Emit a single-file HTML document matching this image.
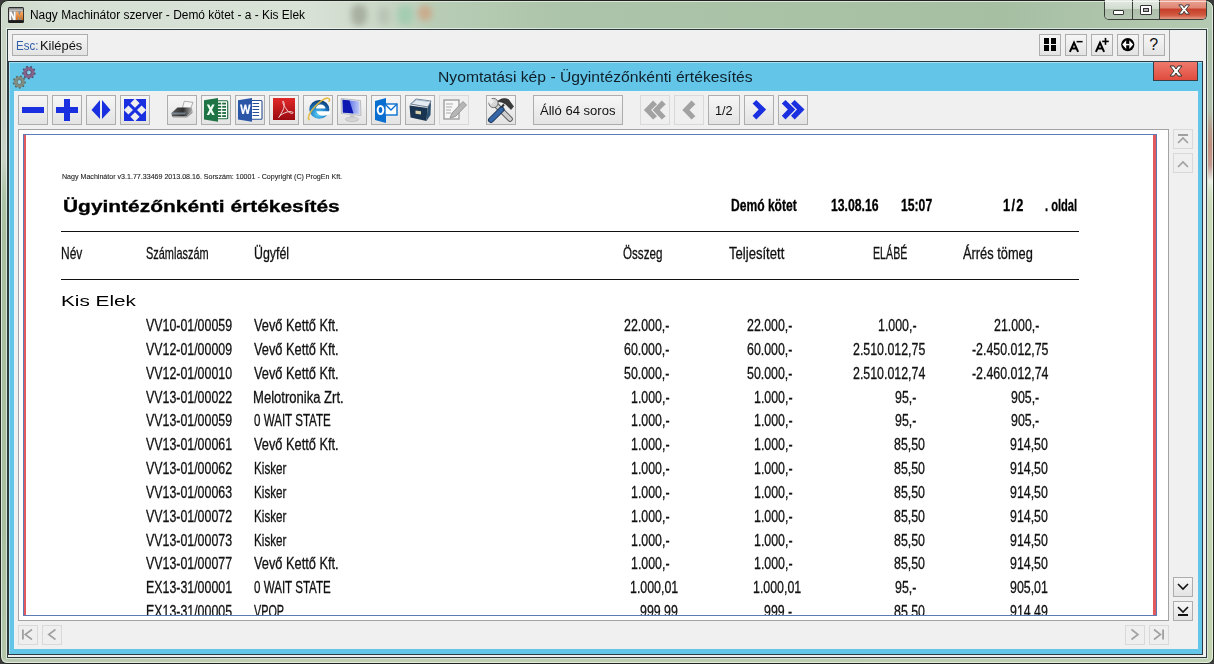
<!DOCTYPE html>
<html><head><meta charset="utf-8"><style>
html,body{margin:0;padding:0;}
body{width:1214px;height:664px;overflow:hidden;position:relative;background:#3a3a3a;font-family:'Liberation Sans',sans-serif;}
.a{position:absolute;box-sizing:border-box;}
.t{position:absolute;white-space:pre;line-height:1;transform-origin:0 0;font-family:'Liberation Sans',sans-serif;}
#frame{left:0;top:0;width:1214px;height:664px;border:1px solid #1f241f;border-radius:8px 8px 7px 7px;background:#a9c1a5;overflow:hidden;}
#tstrip{left:1px;top:1px;width:1212px;height:28px;border-radius:7px 7px 0 0;
  background:linear-gradient(90deg,#cdd9cb 0px,#d7e0d5 60px,#d9e2d7 300px,#cfdbcd 360px,#b9cdb6 430px,#acc4a9 560px,#a9c2a6 800px,#a6bfa3 1000px,#adc4aa 1100px,#b4c9b1 1213px);}
#rstrip{left:1207px;top:29px;width:6px;height:630px;background:linear-gradient(#aec3ab 0px,#b0c2ac 80px,#b89c8c 100px,#c0907e 115px,#c49a90 135px,#d0bcb4 142px,#e8eee4 151px,#d4e2c8 160px,#c8dab8 175px,#c4d8b2 400px,#c0d2b0 630px);}
#bstrip{left:1px;top:658px;width:1212px;height:5px;background:linear-gradient(90deg,#b9c8b0,#c2d0b2 300px,#bccdb0 700px,#c0d2b4 1212px);}
#lstrip{left:1px;top:29px;width:6px;height:630px;background:linear-gradient(#c6d2c4 0px,#c8d2c6 130px,#aec4a8 165px,#a8c0a0 200px,#a8c0a0 500px,#b4c6aa 630px);}
#frame:before{content:'';position:absolute;left:0;top:0;right:0;bottom:0;border:1px solid rgba(255,255,255,.6);border-radius:7px;z-index:2;}
#glow{display:none;}
#cap{left:1104px;top:0;width:103px;height:20px;border:1px solid #3a3f3a;border-top:none;border-radius:0 0 5px 5px;overflow:hidden;}
#cmin{left:0;top:0;width:28px;height:19px;background:linear-gradient(#e4ebe3 0,#d2ddd0 45%,#aebfac 50%,#b5c6b3 100%);border-right:1px solid #3a3f3a;}
#cmax{left:28px;top:0;width:27px;height:19px;background:linear-gradient(#e4ebe3 0,#d2ddd0 45%,#aebfac 50%,#b5c6b3 100%);border-right:1px solid #3a3f3a;}
#cclose{left:55px;top:0;width:47px;height:19px;background:linear-gradient(#eaa597 0,#e08876 40%,#c6402a 50%,#d25a40 80%,#e49a88 100%);}
#inner{left:7px;top:29px;width:1200px;height:629px;border:1px solid #2c3c3e;background:#f0f0f0;box-shadow:0 0 0 1px rgba(255,255,255,.55);}

.btn{position:absolute;box-sizing:border-box;border:1px solid #adadad;background:linear-gradient(#f6f6f6,#e3e3e3);}
.btnd{position:absolute;box-sizing:border-box;border:1px solid #d9d9d9;background:#efefef;}
#sep{left:1169px;top:30px;width:1px;height:31px;background:#a0a0a0;}
#blue{left:8px;top:61px;width:1195px;height:594px;border:1px solid #2d3b44;background:#63c5e8;box-shadow:inset 1px 1px 0 #a6def2;}
#content{left:14px;top:91px;width:1184px;height:558px;background:#f0f0f0;box-shadow:inset 1px 1px 0 #e8f4f8;}
#bclose{left:1153px;top:61px;width:45px;height:20px;border:1px solid #36414a;background:linear-gradient(#ee7a6c,#e04c3e);}
#rframe{left:18px;top:129px;width:1151px;height:492px;border:1px solid #a3a3a3;background:#fff;}
#page{left:23px;top:134px;width:1134px;height:482px;border:1px solid #5c7bb4;background:#fff;}
#redl{left:24px;top:135px;width:2px;height:480px;background:#e35a5e;}
#redr{left:1153px;top:135px;width:3px;height:480px;background:#e35a5e;}
.hl{position:absolute;left:61px;width:1018px;height:1px;background:#111;}
#pageclip{position:absolute;left:0;top:0;width:1214px;height:615px;overflow:hidden;}
#pageclip .t{-webkit-text-stroke:0.3px currentColor;}

</style></head><body>
<div id="frame" class="a"><div id="tstrip" class="a"></div><div id="lstrip" class="a"></div><div id="rstrip" class="a"></div><div id="bstrip" class="a"></div>
<div class="a" style="left:350px;top:3px;width:16px;height:22px;border-radius:8px;background:#8e9484;filter:blur(3px);opacity:.6"></div>
<div class="a" style="left:377px;top:6px;width:12px;height:18px;border-radius:6px;background:#b0b8ac;filter:blur(3px);opacity:.6"></div>
<div class="a" style="left:396px;top:4px;width:16px;height:20px;border-radius:8px;background:#8cc8a6;filter:blur(3px);opacity:.55"></div>
<div class="a" style="left:417px;top:4px;width:14px;height:16px;border-radius:7px;background:#d49470;filter:blur(3px);opacity:.6"></div>
</div>
<div id="glow" class="a"></div>
<!-- app icon -->
<svg class="a" style="left:8px;top:7px" width="16" height="16" viewBox="0 0 16 16">
 <defs><linearGradient id="icg" x1="0" y1="0" x2="0" y2="1"><stop offset="0" stop-color="#7a7a7a"/><stop offset="1" stop-color="#e0e0e0"/></linearGradient>
 <linearGradient id="icm" x1="0" y1="0" x2="0" y2="1"><stop offset="0" stop-color="#f8b070"/><stop offset="1" stop-color="#d86a10"/></linearGradient></defs>
 <rect x="0" y="0" width="16" height="16" rx="1.5" fill="#2c2c2c"/>
 <rect x="1" y="1" width="14" height="3.6" fill="url(#icg)"/>
 <rect x="1" y="4.6" width="14" height="8.6" fill="#8c8c8c"/>
 <path d="M1.3 13.2V4.6h2.3l2.2 5V4.6h1.8v8.6H5.4L3.1 8.1v5.1z" fill="#fafafa"/>
 <path d="M7.9 13.2V4.6h2.2l1.4 4.2 1.4-4.2h2.2v8.6h-1.7V8.6l-1.3 3.6h-1.1L9.7 8.6v4.6z" fill="url(#icm)"/>
 <rect x="0.6" y="13.2" width="14.8" height="2.8" rx="1" fill="#1c1c1c"/>
</svg>
<div id="cap" class="a">
 <div id="cmin" class="a"></div><div id="cmax" class="a"></div><div id="cclose" class="a"></div>
</div>
<div class="a" style="left:1113px;top:10px;width:11px;height:5px;border:1px solid #333;background:#fff;border-radius:1px"></div>
<div class="a" style="left:1140px;top:5px;width:12px;height:10px;border:1px solid #333;background:#fff;border-radius:1px"></div>
<div class="a" style="left:1143px;top:8px;width:6px;height:4px;border:1px solid #333;background:#b0b0b0"></div>
<svg class="a" style="left:1176.5px;top:4.3px" width="14.3" height="11" viewBox="0 0 16 12" preserveAspectRatio="none">
 <path d="M2 1h4l2 3 2-3h4l-4 5 4 5h-4l-2-3-2 3H2l4-5z" fill="#fff" stroke="#333" stroke-width="1"/>
</svg>

<div id="inner" class="a"></div>
<!-- Esc button -->
<div class="btn" style="left:12px;top:34px;width:76px;height:22px"></div>
<!-- right toolbar buttons -->
<div class="btn" style="left:1039px;top:34px;width:22px;height:22px"></div>
<div class="btn" style="left:1065px;top:34px;width:22px;height:22px"></div>
<div class="btn" style="left:1091px;top:34px;width:22px;height:22px"></div>
<div class="btn" style="left:1117px;top:34px;width:22px;height:22px"></div>
<div class="btn" style="left:1143px;top:34px;width:22px;height:22px"></div>
<div id="sep" class="a"></div>
<svg class="a" style="left:1039px;top:34px" width="130" height="22">
 <rect x="5" y="4" width="5" height="6" fill="#000"/><rect x="12" y="4" width="5" height="6" fill="#000"/>
 <rect x="5" y="11" width="5" height="6" fill="#000"/><rect x="12" y="11" width="5" height="6" fill="#000"/>
 <path d="M30.9 17.8L35 8.6 39.1 17.8M32.3 14.6h5.4" fill="none" stroke="#000" stroke-width="2"/>
 <rect x="37.6" y="6.9" width="6" height="1.5" fill="#000"/>
 <path d="M56.9 17.8L61 8.6 65.1 17.8M58.3 14.6h5.4" fill="none" stroke="#000" stroke-width="2"/>
 <rect x="63.2" y="6.6" width="6.6" height="1.6" fill="#000"/><rect x="65.7" y="3.9" width="1.6" height="6.9" fill="#000"/>
 <circle cx="88.75" cy="10.6" r="6.6" fill="#000"/>
 <path d="M83.3 10.6L87.2 6.3V14.9zM94.2 10.6L90.3 6.3V14.9z" fill="#fff"/>
 <rect x="87" y="9.9" width="3.5" height="1.4" fill="#fff"/>
</svg>
<div class="t" style="left:1149.3px;top:37px;font-size:16px;color:#111">?</div>

<!-- blue panel -->
<div id="blue" class="a"></div>
<svg class="a" style="left:10px;top:63px" width="30" height="28" viewBox="0 0 30 28">
 <path d="M23.49 9.22 L25.69 9.91 L25.31 11.77 L23.02 11.54 L22.59 12.24 L23.84 14.18 L22.35 15.36 L20.74 13.71 L19.97 13.97 L19.68 16.26 L17.78 16.21 L17.60 13.91 L16.84 13.61 L15.15 15.17 L13.73 13.92 L15.07 12.05 L14.68 11.33 L12.38 11.44 L12.10 9.56 L14.33 8.99 L14.49 8.19 L12.66 6.80 L13.65 5.18 L15.73 6.17 L16.37 5.66 L15.86 3.42 L17.66 2.81 L18.61 4.91 L19.43 4.93 L20.48 2.89 L22.25 3.58 L21.63 5.80 L22.24 6.34 L24.36 5.45 L25.27 7.12 L23.37 8.41Z" fill="#46506a"/>
 <circle cx="18.9" cy="9.5" r="4.1" fill="none" stroke="#84628a" stroke-width="3"/>
 <circle cx="18.9" cy="9.5" r="1.9" fill="#8fd0ea"/>
 <path d="M13.64 18.30 L15.89 18.74 L15.71 20.57 L13.42 20.55 L13.08 21.26 L14.52 23.04 L13.20 24.32 L11.46 22.83 L10.74 23.16 L10.71 25.45 L8.87 25.59 L8.49 23.32 L7.74 23.11 L6.23 24.84 L4.74 23.77 L5.90 21.79 L5.46 21.14 L3.19 21.50 L2.74 19.72 L4.90 18.95 L4.98 18.17 L3.01 16.99 L3.81 15.33 L5.96 16.14 L6.52 15.59 L5.77 13.42 L7.45 12.66 L8.58 14.66 L9.36 14.60 L10.19 12.46 L11.96 12.96 L11.54 15.21 L12.18 15.67 L14.18 14.56 L15.22 16.08 L13.45 17.54Z" fill="#55625e"/>
 <circle cx="9.3" cy="19" r="3.9" fill="none" stroke="#808c80" stroke-width="3"/>
 <circle cx="9.3" cy="19" r="1.9" fill="#8fd0ea"/>
</svg>
<div id="bclose" class="a"></div>
<svg class="a" style="left:1168px;top:65px" width="16" height="12" viewBox="0 0 16 12">
 <path d="M2 1h4l2 3 2-3h4l-4 5 4 5h-4l-2-3-2 3H2l4-5z" fill="#fff" stroke="#333" stroke-width="1"/>
</svg>
<div id="content" class="a"></div>

<!-- toolbar -->
<div class="btn" style="left:18px;top:95px;width:30px;height:30px"></div>
<div class="btn" style="left:52px;top:95px;width:30px;height:30px"></div>
<div class="btn" style="left:86px;top:95px;width:30px;height:30px"></div>
<div class="btn" style="left:120px;top:95px;width:30px;height:30px"></div>
<div class="btn" style="left:167px;top:95px;width:30px;height:30px"></div>
<div class="btn" style="left:201px;top:95px;width:30px;height:30px"></div>
<div class="btn" style="left:235px;top:95px;width:30px;height:30px"></div>
<div class="btn" style="left:269px;top:95px;width:30px;height:30px"></div>
<div class="btn" style="left:303px;top:95px;width:30px;height:30px"></div>
<div class="btn" style="left:337px;top:95px;width:30px;height:30px"></div>
<div class="btn" style="left:371px;top:95px;width:30px;height:30px"></div>
<div class="btn" style="left:405px;top:95px;width:30px;height:30px"></div>
<div class="btnd" style="left:439px;top:95px;width:30px;height:30px"></div>
<div class="btn" style="left:486px;top:95px;width:30px;height:30px"></div>
<div class="btn" style="left:533px;top:95px;width:90px;height:30px"></div>
<div class="btnd" style="left:640px;top:95px;width:30px;height:30px"></div>
<div class="btnd" style="left:674px;top:95px;width:30px;height:30px"></div>
<div class="btn" style="left:708px;top:95px;width:32px;height:30px"></div>
<div class="btn" style="left:744px;top:95px;width:30px;height:30px"></div>
<div class="btn" style="left:778px;top:95px;width:30px;height:30px"></div>
<!-- toolbar icons -->
<svg class="a" style="left:0;top:90px" width="820" height="36">
 <g fill="#1a2fe0">
  <rect x="22" y="17" width="22" height="6"/>
  <rect x="56" y="17" width="22" height="6"/><rect x="64" y="9" width="6" height="22"/>
  <path d="M91.5 20l8.5-10v19zM110.5 20l-8.5-10v19z"/>
  <rect x="124" y="9" width="22" height="22"/>
 </g>
 <g fill="#eeeeee">
  <path d="M135 8.6l4.6 4.6-4.6 4.6-4.6-4.6zM128.4 15.4l4.6 4.6-4.6 4.6-4.6-4.6zM141.6 15.4l4.6 4.6-4.6 4.6-4.6-4.6zM135 22.2l4.6 4.6-4.6 4.6-4.6-4.6z"/>
 </g>
 <g fill="#1a2fe0">
 </g>
 <g fill="#9e9e9e">
 </g>
 <g fill="#1a2fe0">
  <path d="M752.6 13.4 L756.3 10.0 L766.1 19.5 L756.3 29.6 L752.6 25.7 L758.6 19.5Z"/>
  <path d="M791.0 13.4 L794.7 10.0 L804.5 19.5 L794.7 29.6 L791.0 25.7 L797.0 19.5Z"/>
  <path d="M781.8 13.4 L785.5 10.0 L795.3 19.5 L785.5 29.6 L781.8 25.7 L787.8 19.5Z" stroke="#f0f0f0" stroke-width="1" paint-order="stroke"/>
 </g>
 <g fill="#a2a2a2">
  <path d="M682.3 20.1 L691.5 10.6 L695.4 14.2 L689.5 20.1 L695.4 26.2 L691.5 29.6Z"/>
  <path d="M643.9 20.1 L653.1 10.6 L657.0 14.2 L651.1 20.1 L657.0 26.2 L653.1 29.6Z"/>
  <path d="M652.6 20.1 L661.8 10.6 L665.7 14.2 L659.8 20.1 L665.7 26.2 L661.8 29.6Z" stroke="#f0f0f0" stroke-width="1" paint-order="stroke"/>
 </g>
 <!-- printer -->
 <defs>
  <linearGradient id="pg" x1="0" y1="0" x2="1" y2="0"><stop offset="0" stop-color="#5a5a5a"/><stop offset=".55" stop-color="#2e2e2e"/><stop offset="1" stop-color="#b0b0b0"/></linearGradient>
  <linearGradient id="pdfg" x1="0" y1="0" x2="0" y2="1"><stop offset="0" stop-color="#e0282a"/><stop offset="1" stop-color="#9a0a10"/></linearGradient>
 </defs>
 <g>
  <path d="M184.3 11.2L193 12.4 190.6 18.5 182.4 18z" fill="#f6f6f6" stroke="#9a9a9a" stroke-width=".8"/>
  <path d="M171.5 23L177.5 17.5H191.5L192.5 20.5 186.5 26.5H172z" fill="url(#pg)"/>
  <path d="M172 22.5h14l-1.5 2h-12.5z" fill="#8aa0b0" opacity=".7"/>
  <path d="M173 26.5h13.5l6-6v2.5l-5.5 4.5h-14z" fill="#9a9a9a"/>
 </g>
 <!-- excel -->
 <g>
  <rect x="217" y="10.8" width="10.7" height="18" rx="1" fill="#fff" stroke="#1e6b3e" stroke-width="1.1"/>
  <g fill="#1e6b3e">
   <rect x="218" y="12.7" width="3.2" height="1.8"/><rect x="222.2" y="12.7" width="3.8" height="1.8"/>
   <rect x="218" y="15.9" width="3.2" height="1.8"/><rect x="222.2" y="15.9" width="3.8" height="1.8"/>
   <rect x="218" y="19" width="3.2" height="1.8"/><rect x="222.2" y="19" width="3.8" height="1.8"/>
   <rect x="218" y="22.1" width="3.2" height="1.8"/><rect x="222.2" y="22.1" width="3.8" height="1.8"/>
   <rect x="218" y="25.2" width="3.2" height="1.8"/><rect x="222.2" y="25.2" width="3.8" height="1.8"/>
  </g>
  <path d="M204 10.3L218 8v23.7l-14-2.1z" fill="#1e7445"/>
  <path d="M206.8 14.6h2.4l1.5 2.9 1.5-2.9h2.4l-2.6 5.1 2.7 5.3h-2.4l-1.6-3.1-1.6 3.1h-2.4l2.7-5.3z" fill="#f0fff4"/>
 </g>
 <!-- word -->
 <g>
  <rect x="251" y="10.5" width="11" height="18.8" rx="1" fill="#fff" stroke="#2b4f94" stroke-width="1.1"/>
  <path d="M252.5 13.5h6.6M252.5 16.5h6.6M252.5 19.5h6.6M252.5 22.5h6.6M252.5 25.5h6.6" stroke="#2b4f94" stroke-width="1.1"/>
  <path d="M238 10.3L252 8v23.7l-14-2.1z" fill="#2a56a8"/>
  <path d="M240 14.6h2l1.1 6.2 1.4-6.2h1.7l1.4 6.2 1.1-6.2h2l-2.1 9.4h-1.9l-1.35-5.6-1.35 5.6h-1.9z" fill="#f4f8ff"/>
 </g>
 <!-- pdf -->
 <g>
  <rect x="273" y="8" width="22" height="22" fill="url(#pdfg)"/>
  <path d="M283 11c-1 2 2 6 4 9s5 4 6 3-3-2-6-1-7 3-8 5 2-3 4-7 1-9 0-9z" fill="none" stroke="#f4d0d0" stroke-width="1"/>
 </g>
 <!-- IE -->
 <defs>
  <radialGradient id="ieg" cx=".45" cy=".75" r=".7"><stop offset="0" stop-color="#5fd0f4"/><stop offset=".6" stop-color="#1c7cc8"/><stop offset="1" stop-color="#0d3f78"/></radialGradient>
  <linearGradient id="mong" x1="0" y1="0" x2="1" y2="0"><stop offset="0" stop-color="#0a1ab0"/><stop offset=".5" stop-color="#1a30d8"/><stop offset=".52" stop-color="#7a90e8"/><stop offset="1" stop-color="#c8d4f8"/></linearGradient>
 </defs>
 <g>
  <ellipse cx="319.3" cy="19.4" rx="10" ry="9.4" fill="url(#ieg)"/>
  <path d="M316 18.4a4.6 3.8 0 0 1 9.4 0z" fill="#fff"/>
  <path d="M316.3 21.2h13.7v2.6q-3 2.2-7.2 2q-5-.4-6.5-4.6z" fill="#fff"/>
  <path d="M309.5 30c-2.5-1.5 0-8 5.5-13.5s10-9 13-8.3 1 3 .8 3.5" fill="none" stroke="#e4b836" stroke-width="1.6" opacity=".9"/>
 </g>
 <!-- monitor -->
 <defs>
  <linearGradient id="scg" x1="0" y1="0" x2="1" y2="0"><stop offset="0" stop-color="#2a3ee0"/><stop offset="1" stop-color="#c0ccf6"/></linearGradient>
 </defs>
 <g>
  <path d="M341 8.5L360.5 10.5 361 25.5 341.5 23.5z" fill="#dfe2e6" stroke="#a4a8ac" stroke-width=".7"/>
  <path d="M342.6 9.8L359.2 11.5 359.5 24 342.9 22.5z" fill="url(#scg)"/>
  <path d="M342.6 9.8L349.5 10.5 353.5 23.4 342.9 22.5z" fill="#0d18b0"/>
  <path d="M350 24h4v3h-4z" fill="#c8c8c8"/>
  <ellipse cx="352" cy="29.3" rx="6.6" ry="2.3" fill="#d4d4d4" stroke="#b4b4b4" stroke-width=".6"/>
 </g>
 <!-- outlook -->
 <g>
  <path d="M375 11l11-3v25l-11-3z" fill="#0a6ed1"/>
  <rect x="385" y="14" width="12" height="11" fill="#fff" stroke="#0a6ed1" stroke-width="1.4"/>
  <path d="M385 14l6 6 6-6" fill="none" stroke="#0a6ed1" stroke-width="1.4"/>
  <ellipse cx="380.5" cy="20" rx="2.8" ry="4" fill="none" stroke="#fff" stroke-width="2"/>
 </g>
 <!-- archive -->
 <g>
  <path d="M410.5 14L416 9 431 11 428 17z" fill="#e4ecf2" stroke="#3a5068" stroke-width=".7"/>
  <path d="M412 13.5l4.5-3.6 12 1.6" fill="none" stroke="#9ab0c4" stroke-width=".8"/>
  <path d="M409.5 15.5L427.5 18 426.5 31 410.5 27.5z" fill="#183450"/>
  <path d="M427.5 18L431 12 430.5 25 426.5 31z" fill="#2c5070"/>
  <path d="M415.5 20.5l5.5.7v3.3l-5.5-.7z" fill="#d8d0a8"/>
 </g>
 <!-- edit disabled -->
 <g opacity=".8">
  <rect x="444" y="10" width="15" height="19" fill="#fafafa" stroke="#8a8a8a" stroke-width="1.4"/>
  <path d="M446 14h7M446 17h6M446 20h5M446 23h5" stroke="#999" stroke-width="1"/>
  <path d="M450 28l2-5 11-11.5 3.5 3.5-11 11.5z" fill="#a8a8a8" stroke="#7a7a7a" stroke-width=".9"/>
 </g>
 <!-- tools -->
 <g>
  <path d="M496.5 15.5L510 29" stroke="#555" stroke-width="5.6" stroke-linecap="round"/>
  <path d="M496.5 15.5L510 29" stroke="#cfcfcf" stroke-width="3.8" stroke-linecap="round"/>
  <circle cx="493.5" cy="13" r="4.6" fill="#d6d6d6" stroke="#5a5a5a" stroke-width=".9"/>
  <path d="M487.5 11.5L491 8l3.2 3.2-3.5 3.5z" fill="#eeeeee"/>
  <path d="M498 11Q503 7 508.5 9.5L513.5 16.5 511 19.5 505.5 14Q502 11.5 498 11.5z" fill="#3a3a3a" stroke="#222" stroke-width=".6"/>
  <path d="M504 14.5L500 19" stroke="#333" stroke-width="2"/>
  <path d="M501.5 19.5L491 30" stroke="#1b3656" stroke-width="6" stroke-linecap="round"/>
  <path d="M501.5 19.5L491 30" stroke="#3566a6" stroke-width="4" stroke-linecap="round"/>
 </g>
</svg>

<!-- report frame -->
<div id="rframe" class="a"></div>
<div id="page" class="a"></div>
<div id="redl" class="a"></div>
<div id="redr" class="a"></div>
<div class="hl" style="top:231px"></div>
<div class="hl" style="top:279px"></div>

<!-- scroll buttons -->
<div class="btnd" style="left:1173px;top:129px;width:20px;height:20px"></div>
<div class="btnd" style="left:1173px;top:153px;width:20px;height:20px"></div>
<div class="btn" style="left:1173px;top:577px;width:20px;height:20px"></div>
<div class="btn" style="left:1173px;top:601px;width:20px;height:20px"></div>
<div class="btnd" style="left:18px;top:625px;width:20px;height:20px"></div>
<div class="btnd" style="left:42px;top:625px;width:20px;height:20px"></div>
<div class="btnd" style="left:1125px;top:625px;width:20px;height:20px"></div>
<div class="btnd" style="left:1149px;top:625px;width:20px;height:20px"></div>
<svg class="a" style="left:0;top:0" width="1214" height="664">
 <g fill="none" stroke="#a0a0a0" stroke-width="1.6">
  <path d="M1178 143l5-5 5 5"/><path d="M1178 167l5-5 5 5"/>
  <path d="M32 629.5l-6.8 5 6.8 5"/><path d="M55.5 629.5l-6.8 5 6.8 5"/>
  <path d="M1131.5 629.5l6.5 5-6.5 5"/><path d="M1154 629.5l6.5 5-6.5 5"/>
 </g>
 <g fill="#a0a0a0"><rect x="1178" y="134" width="10" height="2"/><rect x="1162.2" y="629.5" width="1.8" height="10"/><rect x="22" y="629.5" width="1.8" height="10"/></g>
 <g fill="none" stroke="#111" stroke-width="1.6">
  <path d="M1178 584l5 5 5-5"/><path d="M1178 607l5 5 5-5"/>
 </g>
 <rect x="1178" y="614" width="10" height="2" fill="#111"/>
</svg>

<div class="t" style="left:30.00px;top:8.80px;font-size:12px;color:#000;transform:scaleX(0.9937);">Nagy Machinátor szerver - Demó kötet - a - Kis Elek</div>
<div class="t" style="left:15.58px;top:39.98px;font-size:12.5px;color:#2e5fa8;transform:scaleX(0.9195);">Esc:</div>
<div class="t" style="left:40.47px;top:39.98px;font-size:12.5px;color:#111;transform:scaleX(1.0315);">Kilépés</div>
<div class="t" style="left:437.95px;top:69.25px;font-size:15px;color:#10202a;transform:scaleX(1.0452);">Nyomtatási kép - Ügyintézőnkénti értékesítés</div>
<div class="t" style="left:539.50px;top:103.95px;font-size:13px;color:#111;transform:scaleX(1.0046);">Álló 64 soros</div>
<div class="t" style="left:714.50px;top:104.80px;font-size:12px;color:#111;transform:scaleX(1.0583);">1/2</div>
<div id="pageclip">
<div class="t" style="left:62.00px;top:173.12px;font-size:7.5px;color:#222;transform:scaleX(0.9449);-webkit-text-stroke:0.1px">Nagy Machinátor v3.1.77.33469 2013.08.16. Sorszám: 10001 - Copyright (C) ProgEn Kft.</div>
<div class="t" style="left:62.50px;top:198.47px;font-size:16.5px;color:#000;font-weight:bold;transform:scaleX(1.2680);">Ügyintézőnkénti értékesítés</div>
<div class="t" style="left:731.45px;top:198.00px;font-size:16px;color:#000;font-weight:bold;transform:scaleX(0.7546);">Demó kötet</div>
<div class="t" style="left:831.44px;top:198.00px;font-size:16px;color:#000;font-weight:bold;transform:scaleX(0.7641);">13.08.16</div>
<div class="t" style="left:900.54px;top:198.00px;font-size:16px;color:#000;font-weight:bold;transform:scaleX(0.7621);">15:07</div>
<div class="t" style="left:1045.41px;top:198.00px;font-size:16px;color:#000;font-weight:bold;transform:scaleX(0.6945);">. oldal</div>
<div class="t" style="left:1003.40px;top:198.20px;font-size:16px;color:#000;font-weight:bold;transform:scaleX(0.8000);letter-spacing:1.6px">1/2</div>
<div class="t" style="left:61.29px;top:244.75px;font-size:17px;color:#111;transform:scaleX(0.7063);">Név</div>
<div class="t" style="left:146.40px;top:244.75px;font-size:17px;color:#111;transform:scaleX(0.6434);">Számlaszám</div>
<div class="t" style="left:253.87px;top:244.75px;font-size:17px;color:#111;transform:scaleX(0.7283);">Ügyfél</div>
<div class="t" style="left:622.70px;top:244.75px;font-size:17px;color:#111;transform:scaleX(0.6838);">Összeg</div>
<div class="t" style="left:728.50px;top:244.75px;font-size:17px;color:#111;transform:scaleX(0.7699);">Teljesített</div>
<div class="t" style="left:873.27px;top:244.75px;font-size:17px;color:#111;transform:scaleX(0.6265);">ELÁBÉ</div>
<div class="t" style="left:962.90px;top:244.75px;font-size:17px;color:#111;transform:scaleX(0.7543);">Árrés tömeg</div>
<div class="t" style="left:61.06px;top:292.82px;font-size:15.5px;color:#000;transform:scaleX(1.3396);-webkit-text-stroke:0">Kis Elek</div>
<div class="t" style="left:146.30px;top:318.00px;font-size:16px;color:#111;transform:scaleX(0.7736);">VV10-01/00059</div>
<div class="t" style="left:254.30px;top:318.00px;font-size:16px;color:#111;transform:scaleX(0.7998);">Vevő Kettő Kft.</div>
<div class="t" style="left:623.84px;top:318.00px;font-size:16px;color:#111;transform:scaleX(0.7736);">22.000,-</div>
<div class="t" style="left:746.84px;top:318.00px;font-size:16px;color:#111;transform:scaleX(0.7736);">22.000,-</div>
<div class="t" style="left:877.72px;top:318.00px;font-size:16px;color:#111;transform:scaleX(0.7736);">1.000,-</div>
<div class="t" style="left:993.84px;top:318.00px;font-size:16px;color:#111;transform:scaleX(0.7736);">21.000,-</div>
<div class="t" style="left:146.30px;top:341.84px;font-size:16px;color:#111;transform:scaleX(0.7736);">VV12-01/00009</div>
<div class="t" style="left:254.30px;top:341.84px;font-size:16px;color:#111;transform:scaleX(0.7998);">Vevő Kettő Kft.</div>
<div class="t" style="left:623.84px;top:341.84px;font-size:16px;color:#111;transform:scaleX(0.7736);">60.000,-</div>
<div class="t" style="left:746.84px;top:341.84px;font-size:16px;color:#111;transform:scaleX(0.7736);">60.000,-</div>
<div class="t" style="left:852.65px;top:341.84px;font-size:16px;color:#111;transform:scaleX(0.7736);">2.510.012,75</div>
<div class="t" style="left:971.53px;top:341.84px;font-size:16px;color:#111;transform:scaleX(0.7736);">-2.450.012,75</div>
<div class="t" style="left:146.30px;top:365.68px;font-size:16px;color:#111;transform:scaleX(0.7736);">VV12-01/00010</div>
<div class="t" style="left:254.30px;top:365.68px;font-size:16px;color:#111;transform:scaleX(0.7998);">Vevő Kettő Kft.</div>
<div class="t" style="left:623.84px;top:365.68px;font-size:16px;color:#111;transform:scaleX(0.7736);">50.000,-</div>
<div class="t" style="left:746.84px;top:365.68px;font-size:16px;color:#111;transform:scaleX(0.7736);">50.000,-</div>
<div class="t" style="left:852.65px;top:365.68px;font-size:16px;color:#111;transform:scaleX(0.7736);">2.510.012,74</div>
<div class="t" style="left:971.53px;top:365.68px;font-size:16px;color:#111;transform:scaleX(0.7736);">-2.460.012,74</div>
<div class="t" style="left:146.30px;top:389.52px;font-size:16px;color:#111;transform:scaleX(0.7736);">VV13-01/00022</div>
<div class="t" style="left:253.48px;top:389.52px;font-size:16px;color:#111;transform:scaleX(0.8160);">Melotronika Zrt.</div>
<div class="t" style="left:630.72px;top:389.52px;font-size:16px;color:#111;transform:scaleX(0.7736);">1.000,-</div>
<div class="t" style="left:753.72px;top:389.52px;font-size:16px;color:#111;transform:scaleX(0.7736);">1.000,-</div>
<div class="t" style="left:894.93px;top:389.52px;font-size:16px;color:#111;transform:scaleX(0.7736);">95,-</div>
<div class="t" style="left:1011.04px;top:389.52px;font-size:16px;color:#111;transform:scaleX(0.7736);">905,-</div>
<div class="t" style="left:146.30px;top:413.36px;font-size:16px;color:#111;transform:scaleX(0.7736);">VV13-01/00059</div>
<div class="t" style="left:254.30px;top:413.36px;font-size:16px;color:#111;transform:scaleX(0.7237);">0 WAIT STATE</div>
<div class="t" style="left:630.72px;top:413.36px;font-size:16px;color:#111;transform:scaleX(0.7736);">1.000,-</div>
<div class="t" style="left:753.72px;top:413.36px;font-size:16px;color:#111;transform:scaleX(0.7736);">1.000,-</div>
<div class="t" style="left:894.93px;top:413.36px;font-size:16px;color:#111;transform:scaleX(0.7736);">95,-</div>
<div class="t" style="left:1011.04px;top:413.36px;font-size:16px;color:#111;transform:scaleX(0.7736);">905,-</div>
<div class="t" style="left:146.30px;top:437.20px;font-size:16px;color:#111;transform:scaleX(0.7736);">VV13-01/00061</div>
<div class="t" style="left:254.30px;top:437.20px;font-size:16px;color:#111;transform:scaleX(0.7998);">Vevő Kettő Kft.</div>
<div class="t" style="left:630.72px;top:437.20px;font-size:16px;color:#111;transform:scaleX(0.7736);">1.000,-</div>
<div class="t" style="left:753.72px;top:437.20px;font-size:16px;color:#111;transform:scaleX(0.7736);">1.000,-</div>
<div class="t" style="left:893.95px;top:437.20px;font-size:16px;color:#111;transform:scaleX(0.7736);">85,50</div>
<div class="t" style="left:1010.07px;top:437.20px;font-size:16px;color:#111;transform:scaleX(0.7736);">914,50</div>
<div class="t" style="left:146.30px;top:461.04px;font-size:16px;color:#111;transform:scaleX(0.7736);">VV13-01/00062</div>
<div class="t" style="left:253.57px;top:461.04px;font-size:16px;color:#111;transform:scaleX(0.7297);">Kisker</div>
<div class="t" style="left:630.72px;top:461.04px;font-size:16px;color:#111;transform:scaleX(0.7736);">1.000,-</div>
<div class="t" style="left:753.72px;top:461.04px;font-size:16px;color:#111;transform:scaleX(0.7736);">1.000,-</div>
<div class="t" style="left:893.95px;top:461.04px;font-size:16px;color:#111;transform:scaleX(0.7736);">85,50</div>
<div class="t" style="left:1010.07px;top:461.04px;font-size:16px;color:#111;transform:scaleX(0.7736);">914,50</div>
<div class="t" style="left:146.30px;top:484.88px;font-size:16px;color:#111;transform:scaleX(0.7736);">VV13-01/00063</div>
<div class="t" style="left:253.57px;top:484.88px;font-size:16px;color:#111;transform:scaleX(0.7297);">Kisker</div>
<div class="t" style="left:630.72px;top:484.88px;font-size:16px;color:#111;transform:scaleX(0.7736);">1.000,-</div>
<div class="t" style="left:753.72px;top:484.88px;font-size:16px;color:#111;transform:scaleX(0.7736);">1.000,-</div>
<div class="t" style="left:893.95px;top:484.88px;font-size:16px;color:#111;transform:scaleX(0.7736);">85,50</div>
<div class="t" style="left:1010.07px;top:484.88px;font-size:16px;color:#111;transform:scaleX(0.7736);">914,50</div>
<div class="t" style="left:146.30px;top:508.72px;font-size:16px;color:#111;transform:scaleX(0.7736);">VV13-01/00072</div>
<div class="t" style="left:253.57px;top:508.72px;font-size:16px;color:#111;transform:scaleX(0.7297);">Kisker</div>
<div class="t" style="left:630.72px;top:508.72px;font-size:16px;color:#111;transform:scaleX(0.7736);">1.000,-</div>
<div class="t" style="left:753.72px;top:508.72px;font-size:16px;color:#111;transform:scaleX(0.7736);">1.000,-</div>
<div class="t" style="left:893.95px;top:508.72px;font-size:16px;color:#111;transform:scaleX(0.7736);">85,50</div>
<div class="t" style="left:1010.07px;top:508.72px;font-size:16px;color:#111;transform:scaleX(0.7736);">914,50</div>
<div class="t" style="left:146.30px;top:532.56px;font-size:16px;color:#111;transform:scaleX(0.7736);">VV13-01/00073</div>
<div class="t" style="left:253.57px;top:532.56px;font-size:16px;color:#111;transform:scaleX(0.7297);">Kisker</div>
<div class="t" style="left:630.72px;top:532.56px;font-size:16px;color:#111;transform:scaleX(0.7736);">1.000,-</div>
<div class="t" style="left:753.72px;top:532.56px;font-size:16px;color:#111;transform:scaleX(0.7736);">1.000,-</div>
<div class="t" style="left:893.95px;top:532.56px;font-size:16px;color:#111;transform:scaleX(0.7736);">85,50</div>
<div class="t" style="left:1010.07px;top:532.56px;font-size:16px;color:#111;transform:scaleX(0.7736);">914,50</div>
<div class="t" style="left:146.30px;top:556.40px;font-size:16px;color:#111;transform:scaleX(0.7736);">VV13-01/00077</div>
<div class="t" style="left:254.30px;top:556.40px;font-size:16px;color:#111;transform:scaleX(0.7998);">Vevő Kettő Kft.</div>
<div class="t" style="left:630.72px;top:556.40px;font-size:16px;color:#111;transform:scaleX(0.7736);">1.000,-</div>
<div class="t" style="left:753.72px;top:556.40px;font-size:16px;color:#111;transform:scaleX(0.7736);">1.000,-</div>
<div class="t" style="left:893.95px;top:556.40px;font-size:16px;color:#111;transform:scaleX(0.7736);">85,50</div>
<div class="t" style="left:1010.07px;top:556.40px;font-size:16px;color:#111;transform:scaleX(0.7736);">914,50</div>
<div class="t" style="left:145.53px;top:580.24px;font-size:16px;color:#111;transform:scaleX(0.7736);">EX13-31/00001</div>
<div class="t" style="left:254.30px;top:580.24px;font-size:16px;color:#111;transform:scaleX(0.7237);">0 WAIT STATE</div>
<div class="t" style="left:629.74px;top:580.24px;font-size:16px;color:#111;transform:scaleX(0.7736);">1.000,01</div>
<div class="t" style="left:752.74px;top:580.24px;font-size:16px;color:#111;transform:scaleX(0.7736);">1.000,01</div>
<div class="t" style="left:894.93px;top:580.24px;font-size:16px;color:#111;transform:scaleX(0.7736);">95,-</div>
<div class="t" style="left:1010.07px;top:580.24px;font-size:16px;color:#111;transform:scaleX(0.7736);">905,01</div>
<div class="t" style="left:145.53px;top:604.08px;font-size:16px;color:#111;transform:scaleX(0.7736);">EX13-31/00005</div>
<div class="t" style="left:254.30px;top:604.08px;font-size:16px;color:#111;transform:scaleX(0.6760);">VPOP</div>
<div class="t" style="left:640.07px;top:604.08px;font-size:16px;color:#111;transform:scaleX(0.7736);">999,99</div>
<div class="t" style="left:764.04px;top:604.08px;font-size:16px;color:#111;transform:scaleX(0.7736);">999,-</div>
<div class="t" style="left:893.95px;top:604.08px;font-size:16px;color:#111;transform:scaleX(0.7736);">85,50</div>
<div class="t" style="left:1010.07px;top:604.08px;font-size:16px;color:#111;transform:scaleX(0.7736);">914,49</div>
</div>
</body></html>
